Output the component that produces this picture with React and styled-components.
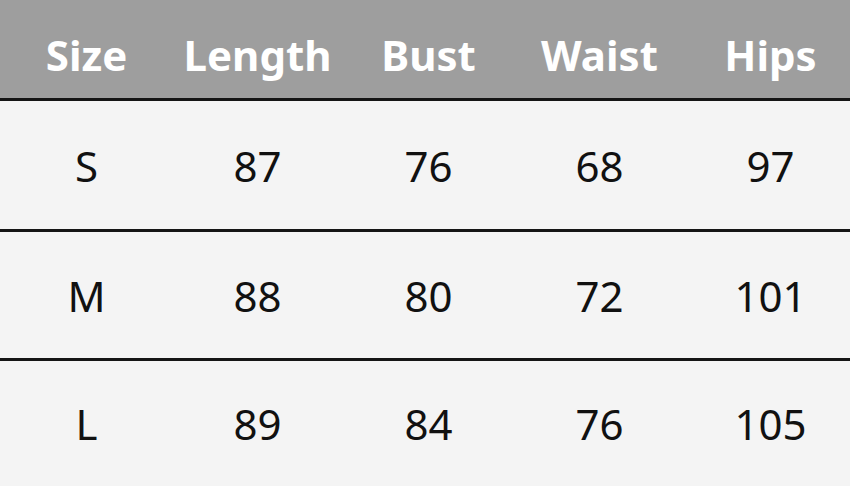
import React from 'react';
import styled, { createGlobalStyle } from 'styled-components';

const GlobalStyle = createGlobalStyle`
  html, body {
    margin: 0;
    padding: 0;
    background: #f4f4f4;
  }
  #root {
    height: 486px;
  }
`;

const Table = styled.div`
  display: flex;
  flex-direction: column;
  width: 850px;
  height: 486px;
  overflow: hidden;
  background: #f4f4f4;
  font-family: 'Noto Sans', 'Open Sans', sans-serif;
`;

const Row = styled.div`
  box-sizing: border-box;
  display: grid;
  grid-template-columns: repeat(5, 171px);
  align-items: center;
  padding-left: 1px;
  height: ${({ height }) => height}px;
  flex-shrink: 0;
  background: ${({ header }) => (header ? '#9e9e9e' : '#f4f4f4')};
  border-bottom: ${({ last }) => (last ? 'none' : '3px solid #151515')};
`;

const HeadCell = styled.div`
  color: #ffffff;
  font-size: 42px;
  font-weight: 700;
  text-align: center;
  padding-top: 11px;
  white-space: nowrap;
`;

const Cell = styled.div`
  color: #111111;
  font-size: 42px;
  font-weight: 400;
  text-align: center;
`;

const columns = ['Size', 'Length', 'Bust', 'Waist', 'Hips'];

const rows = [
  { id: 'S', values: ['S', '87', '76', '68', '97'], height: 131 },
  { id: 'M', values: ['M', '88', '80', '72', '101'], height: 129 },
  { id: 'L', values: ['L', '89', '84', '76', '105'], height: 125 },
];

export default function App() {
  return (
    <>
      <GlobalStyle />
      <Table>
        <Row header height={101}>
          {columns.map((name) => (
            <HeadCell key={name}>{name}</HeadCell>
          ))}
        </Row>
        {rows.map((row, index) => (
          <Row key={row.id} height={row.height} last={index === rows.length - 1}>
            {row.values.map((value, i) => (
              <Cell key={i}>{value}</Cell>
            ))}
          </Row>
        ))}
      </Table>
    </>
  );
}
